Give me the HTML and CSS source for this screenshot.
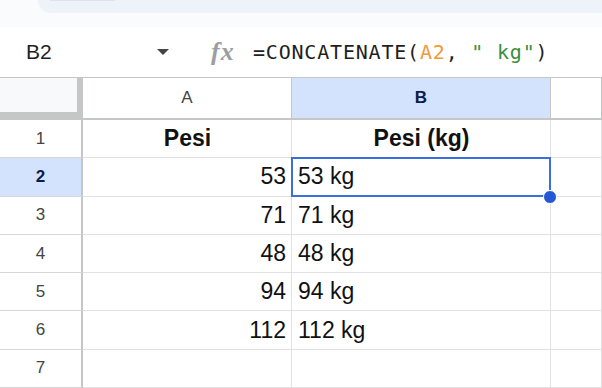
FILE: index.html
```html
<!DOCTYPE html>
<html lang="en">
  <head>
    <meta charset="UTF-8" />
    <title>Pesi</title>
    <link rel="stylesheet" href="styles.css">
  </head>
  <body>
    <div class="top">
      <div class="search"><span class="pill"></span></div>
    </div>

    <div class="formula-bar">
      <div class="name-box">
        <span>B2</span>
        <span class="caret"></span>
      </div>
      <span class="fx">fx</span>
      <div class="formula">=CONCATENATE(<span class="ref">A2</span>, <span class="str">" kg"</span>)</div>
    </div>

    <div class="grid">
      <div class="corner"></div>
      <div class="col-head">A</div>
      <div class="col-head active">B</div>
      <div class="col-head"></div>

      <div class="row-head">1</div>
      <div class="cell title">Pesi</div>
      <div class="cell title">Pesi (kg)</div>
      <div class="cell"></div>

      <div class="row-head active">2</div>
      <div class="cell num">53</div>
      <div class="cell selected">53 kg<span class="handle"></span></div>
      <div class="cell"></div>

      <div class="row-head">3</div>
      <div class="cell num">71</div>
      <div class="cell">71 kg</div>
      <div class="cell"></div>

      <div class="row-head">4</div>
      <div class="cell num">48</div>
      <div class="cell">48 kg</div>
      <div class="cell"></div>

      <div class="row-head">5</div>
      <div class="cell num">94</div>
      <div class="cell">94 kg</div>
      <div class="cell"></div>

      <div class="row-head">6</div>
      <div class="cell num">112</div>
      <div class="cell">112 kg</div>
      <div class="cell"></div>

      <div class="row-head">7</div>
      <div class="cell"></div>
      <div class="cell"></div>
      <div class="cell"></div>
    </div>
  </body>
</html>
```

FILE: styles.css
```css
body {
  margin: 0;
  width: 602px;
  height: 388px;
  overflow: hidden;
  background: white;
  font-family: "Liberation Sans", Arial, sans-serif;
}
.top {
  height: 27px;
  background-color: #f9fbfd;
  padding-left: 38px;
}
.search {
  height: 13px;
  background-color: #eef2f9;
  border-bottom-left-radius: 14px;
  padding-left: 12px;
}
.pill {
  display: block;
  width: 65px;
  height: 1px;
  background-color: #dde3ee;
}
.formula-bar {
  height: 50px;
  display: flex;
  align-items: center;
  border-bottom: 1px solid #c4c7c5;
}
.name-box {
  width: 143px;
  padding: 0 12px 0 26px;
  display: flex;
  align-items: center;
  justify-content: space-between;
  font-size: 21px;
  color: #1f1f1f;
}
.caret {
  width: 0;
  height: 0;
  border-left: 6px solid transparent;
  border-right: 6px solid transparent;
  border-top: 6px solid #444;
}
.fx {
  margin-left: 30px;
  width: 42px;
  font-family: "Liberation Serif", serif;
  font-style: italic;
  font-weight: bold;
  font-size: 26px;
  color: #9a9ea3;
  letter-spacing: 1px;
}
.formula {
  font-family: "DejaVu Sans Mono", monospace;
  font-size: 20px;
  letter-spacing: 0.8px;
  color: #1f1f1f;
}
.ref {
  color: #f29a38;
}
.str {
  color: #3b8e3f;
}
.grid {
  display: grid;
  grid-template-columns: 83px 209px 259px 1fr;
  grid-template-rows: 42px repeat(7, 38.3px);
}
.grid > div {
  box-sizing: border-box;
  display: flex;
  align-items: center;
}
.corner {
  background-color: #f8f9fa;
  border-right: 6px solid #c4c7c5;
  border-bottom: 8px solid #c4c7c5;
}
.col-head {
  justify-content: center;
  font-size: 17px;
  color: #444;
  border-right: 1px solid #c4c7c5;
  border-bottom: 2px solid #c4c7c5;
}
.row-head {
  justify-content: center;
  font-size: 17px;
  color: #444;
  border-right: 2px solid #c4c7c5;
  border-bottom: 1px solid #d5d7d9;
}
.col-head.active,
.row-head.active {
  background-color: #d3e3fd;
  color: #0b1d4a;
  font-weight: bold;
}
.cell {
  font-size: 23px;
  color: #111;
  padding: 0 5px 0 6px;
  border-right: 1px solid #e1e1e1;
  border-bottom: 1px solid #e1e1e1;
}
.cell.title {
  justify-content: center;
  font-weight: bold;
}
.cell.num {
  justify-content: flex-end;
}
.selected {
  position: relative;
}
.selected::after {
  content: "";
  position: absolute;
  top: -1px;
  left: -1px;
  right: -1px;
  bottom: -1px;
  border: 2px solid #3b6fdc;
}
.handle {
  position: absolute;
  right: -7px;
  bottom: -8px;
  width: 12px;
  height: 12px;
  border: 1px solid white;
  border-radius: 50%;
  background-color: #2457d3;
  z-index: 2;
}
```
